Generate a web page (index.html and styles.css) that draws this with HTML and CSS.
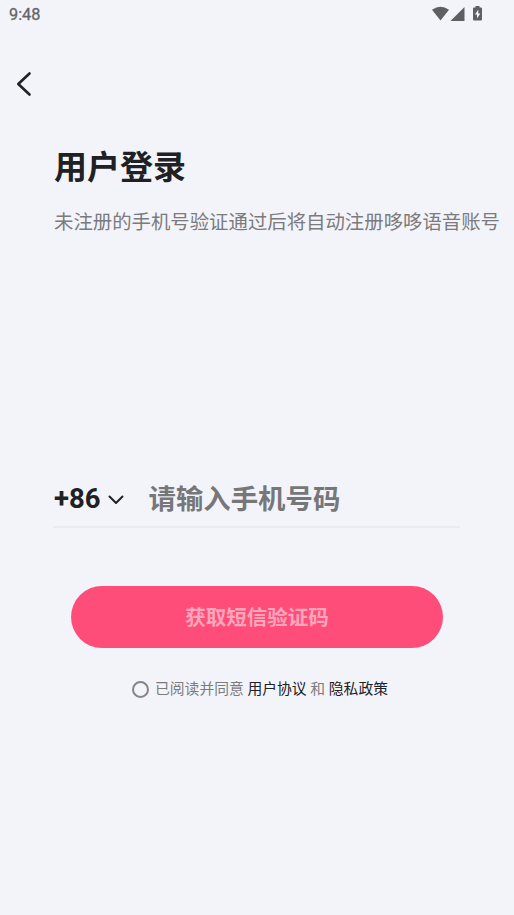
FILE: index.html
```html
<!DOCTYPE html>
<html lang="zh-CN">
<head>
<meta charset="utf-8">
<title>用户登录</title>
<link rel="stylesheet" href="styles.css">
</head>
<body>
<header class="status">
  <span class="time">9:48</span>
  <svg class="status-icons" width="51" height="16" viewBox="0 0 51 16" fill="#5f5f61">
    <path d="M0 3.700Q8.500-2.300 17 3.700L8.500 14.500Z"/>
    <path d="M18.500 15L32.500 1V15Z"/>
    <path fill-rule="evenodd" d="M43.500 0h4v1.500h1.500q1 0 1 1v11q0 1-1 1h-7q-1 0-1-1v-11q0-1 1-1h1.500zM46.300 3.500l-3.300 5h2V12.500l3.300-5h-2z"/>
  </svg>
</header>
<nav class="nav">
  <svg width="16" height="26" viewBox="0 0 16 26" fill="none" stroke="#202124" stroke-width="2.6" stroke-linecap="round" stroke-linejoin="round"><path d="M13.500 2.500L2.300 13L13.500 23.500"/></svg>
</nav>
<main class="login">
  <h1 class="title">用户登录</h1>
  <p class="hint">未注册的手机号验证通过后将自动注册哆哆语音账号</p>
  <div class="phone">
    <span class="code">+86</span>
    <svg class="chevron" width="16" height="10" viewBox="0 0 16 10" fill="none" stroke="#202124" stroke-width="2" stroke-linecap="round" stroke-linejoin="round"><path d="M1.500 1.500L8 8L14.500 1.500"/></svg>
    <span class="placeholder">请输入手机号码</span>
  </div>
  <button class="submit">获取短信验证码</button>
  <div class="agree">
    <span class="radio"></span>
    <span>已阅读并同意 <b>用户协议</b> 和 <b>隐私政策</b></span>
  </div>
</main>
</body>
</html>
```
FILE: styles.css
```css
* { box-sizing: border-box; }
body { margin: 0; height: 915px; overflow: hidden; background: #f3f4fa; color: #202124; font-family: Roboto, "Noto Sans CJK SC", sans-serif; }
.status { height: 28px; padding: 0 31px 0 9px; display: flex; align-items: center; justify-content: space-between; }
.time { padding-top: 2px; font-size: 16.300px; line-height: 26px; color: #656568; font-weight: 400; -webkit-text-stroke: 0.3px #656568; }
.status-icons { display: block; }
.nav { height: 114px; padding: 43px 0 0 16px; }
.nav svg { display: block; }
.login { padding: 0 54px; }
.title { margin: 0; font-size: 33px; line-height: 52px; font-weight: 700; }
.hint { margin: 14px 0 0; font-size: 19.400px; line-height: 30px; color: #7b7b7d; white-space: nowrap; }
.phone { margin-top: 232px; height: 58px; display: flex; align-items: center; border-bottom: 2px solid #e9eaef; }
.code { font-size: 27.500px; font-weight: 700; }
.chevron { margin: 3px 25px 0 7px; }
.placeholder { padding-top: 3px; font-size: 27.400px; line-height: 40px; font-weight: 700; color: #777779; }
.submit { display: block; width: 372px; height: 62px; margin: 58px 0 0 17px; padding: 2px 0 0; border: 0; border-radius: 31px; background: #ff4d79; color: #ffa6bc; font: 700 20.500px/60px Roboto, "Noto Sans CJK SC", sans-serif; }
.agree { display: flex; align-items: center; margin: 30px 0 0 78px; font-size: 14.800px; line-height: 22px; color: #7b7b7d; white-space: nowrap; }
.agree b { color: #202124; font-weight: 400; }
.radio { width: 17px; height: 17px; margin-right: 6px; border: 2px solid #858587; border-radius: 50%; }
```
